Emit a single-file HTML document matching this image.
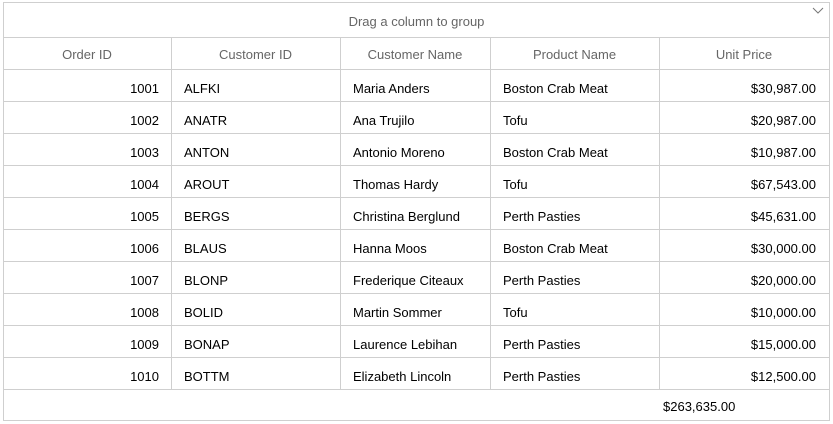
<!DOCTYPE html><html><head><style>
body{margin:0;width:833px;height:424px;background:#fff;font-family:"Liberation Sans",sans-serif;font-size:13px;color:#000;position:relative;overflow:hidden}
.a{position:absolute}
.h{position:absolute;height:1px;background:#cfcfcf}
.v{position:absolute;width:1px;background:#cfcfcf}
.t{position:absolute;white-space:nowrap;line-height:16px}
.g{color:#666}
</style></head><body>
<div class="h" style="left:3px;top:2px;width:827px"></div>
<div class="h" style="left:3px;top:37px;width:827px"></div>
<div class="h" style="left:3px;top:420px;width:827px"></div>
<div class="v" style="left:3px;top:2px;height:419px"></div>
<div class="v" style="left:829px;top:2px;height:419px"></div>
<div class="t g" style="left:3px;width:827px;text-align:center;top:14px">Drag a column to group</div>
<svg class="a" style="left:812px;top:7px" width="12" height="8"><path d="M1 1 L6 6 L11 1" fill="none" stroke="#777" stroke-width="1"/></svg>
<div id="grid"></div>
<script>
var cols=[3,171,340,490,659,829];
var heads=["Order ID","Customer ID","Customer Name","Product Name","Unit Price"];
var rows=[["1001","ALFKI","Maria Anders","Boston Crab Meat","$30,987.00"],["1002","ANATR","Ana Trujilo","Tofu","$20,987.00"],["1003","ANTON","Antonio Moreno","Boston Crab Meat","$10,987.00"],["1004","AROUT","Thomas Hardy","Tofu","$67,543.00"],["1005","BERGS","Christina Berglund","Perth Pasties","$45,631.00"],["1006","BLAUS","Hanna Moos","Boston Crab Meat","$30,000.00"],["1007","BLONP","Frederique Citeaux","Perth Pasties","$20,000.00"],["1008","BOLID","Martin Sommer","Tofu","$10,000.00"],["1009","BONAP","Laurence Lebihan","Perth Pasties","$15,000.00"],["1010","BOTTM","Elizabeth Lincoln","Perth Pasties","$12,500.00"]];
var h="";
for(var i=1;i<5;i++)h+='<div class="v" style="left:'+cols[i]+'px;top:37px;height:352px"></div>';
for(var i=0;i<5;i++)h+='<div class="t g" style="left:'+cols[i]+'px;width:'+(cols[i+1]-cols[i])+'px;text-align:center;top:47px">'+heads[i]+'</div>';
for(var r=0;r<=10;r++)h+='<div class="h" style="left:3px;top:'+(69+r*32)+'px;width:827px"></div>';
for(var r=0;r<10;r++){var y=69+r*32+12;
 h+='<div class="t" style="right:'+(833-159)+'px;top:'+y+'px">'+rows[r][0]+'</div>';
 for(var c=1;c<4;c++)h+='<div class="t" style="left:'+(cols[c]+13)+'px;top:'+y+'px">'+rows[r][c]+'</div>';
 h+='<div class="t" style="right:'+(833-816)+'px;top:'+y+'px">'+rows[r][4]+'</div>';}
h+='<div class="t" style="left:663px;top:399px">$263,635.00</div>';
document.getElementById("grid").innerHTML=h;
</script>
</body></html>
